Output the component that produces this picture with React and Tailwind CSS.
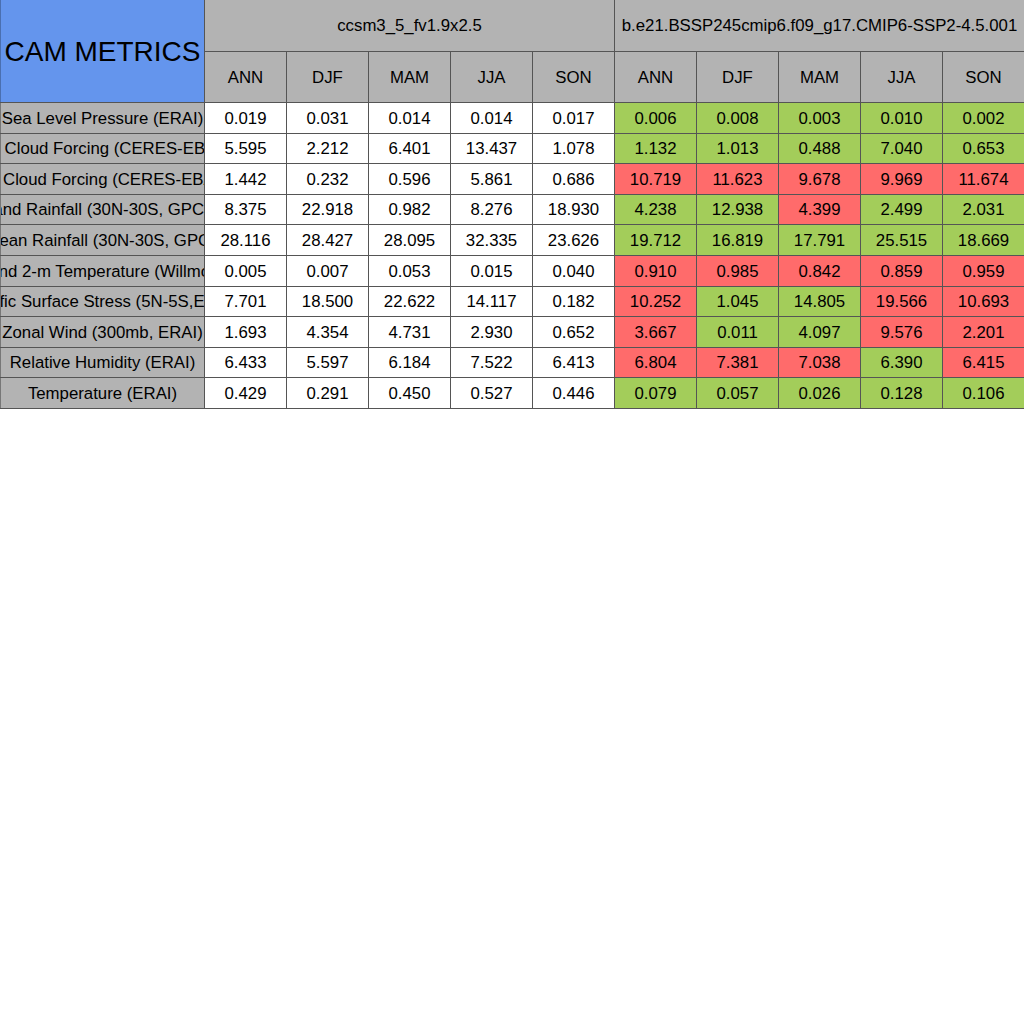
import React from "react";

const seasons = ["ANN", "DJF", "MAM", "JJA", "SON"];

const rows = [
  ["Sea Level Pressure (ERAI)", ["0.019", "0.031", "0.014", "0.014", "0.017"], [["0.006", "g"], ["0.008", "g"], ["0.003", "g"], ["0.010", "g"], ["0.002", "g"]]],
  ["SW Cloud Forcing (CERES-EBAF)", ["5.595", "2.212", "6.401", "13.437", "1.078"], [["1.132", "g"], ["1.013", "g"], ["0.488", "g"], ["7.040", "g"], ["0.653", "g"]]],
  ["LW Cloud Forcing (CERES-EBAF)", ["1.442", "0.232", "0.596", "5.861", "0.686"], [["10.719", "r"], ["11.623", "r"], ["9.678", "r"], ["9.969", "r"], ["11.674", "r"]]],
  ["Land Rainfall (30N-30S, GPCP)", ["8.375", "22.918", "0.982", "8.276", "18.930"], [["4.238", "g"], ["12.938", "g"], ["4.399", "r"], ["2.499", "g"], ["2.031", "g"]]],
  ["Ocean Rainfall (30N-30S, GPCP)", ["28.116", "28.427", "28.095", "32.335", "23.626"], [["19.712", "g"], ["16.819", "g"], ["17.791", "g"], ["25.515", "g"], ["18.669", "g"]]],
  ["Land 2-m Temperature (Willmott)", ["0.005", "0.007", "0.053", "0.015", "0.040"], [["0.910", "r"], ["0.985", "r"], ["0.842", "r"], ["0.859", "r"], ["0.959", "r"]]],
  ["Pacific Surface Stress (5N-5S,ERAI)", ["7.701", "18.500", "22.622", "14.117", "0.182"], [["10.252", "r"], ["1.045", "g"], ["14.805", "g"], ["19.566", "r"], ["10.693", "r"]]],
  ["Zonal Wind (300mb, ERAI)", ["1.693", "4.354", "4.731", "2.930", "0.652"], [["3.667", "r"], ["0.011", "g"], ["4.097", "g"], ["9.576", "r"], ["2.201", "r"]]],
  ["Relative Humidity (ERAI)", ["6.433", "5.597", "6.184", "7.522", "6.413"], [["6.804", "r"], ["7.381", "r"], ["7.038", "r"], ["6.390", "g"], ["6.415", "r"]]],
  ["Temperature (ERAI)", ["0.429", "0.291", "0.450", "0.527", "0.446"], [["0.079", "g"], ["0.057", "g"], ["0.026", "g"], ["0.128", "g"], ["0.106", "g"]]],
];

const cell = "flex items-center justify-center overflow-hidden whitespace-nowrap pt-px";

export default function App() {
  return (
    <div
      className="w-[1024px] h-[1024px] bg-white text-black text-[16.8px]"
      style={{ fontFamily: '"Liberation Sans", Arial, sans-serif' }}
    >
      <div className="grid grid-cols-[204px_repeat(10,81px)] grid-rows-[51px_50px_repeat(10,29.6px)] gap-px bg-[#555] pb-px w-[1024px]">
        <div className={`${cell} row-span-2 bg-[#6495ed] text-[28px] border-l border-[#4a6fb0]`}>
          <span>CAM METRICS</span>
        </div>
        <div className={`${cell} col-span-5 bg-[#b3b3b3]`}>ccsm3_5_fv1.9x2.5</div>
        <div className={`${cell} col-span-5 bg-[#b3b3b3]`}>b.e21.BSSP245cmip6.f09_g17.CMIP6-SSP2-4.5.001</div>
        {[...seasons, ...seasons].map((s, i) => (
          <div key={"h" + i} className={`${cell} bg-[#b3b3b3]`}>
            {s}
          </div>
        ))}
        {rows.map(([name, a, b], ri) => (
          <React.Fragment key={ri}>
            <div className={`${cell} bg-[#b3b3b3] border-l border-[#777]`}>
              <span className="shrink-0">{name}</span>
            </div>
            {a.map((v, i) => (
              <div key={"a" + i} className={`${cell} bg-white`}>
                {v}
              </div>
            ))}
            {b.map(([v, c], i) => (
              <div key={"b" + i} className={`${cell} ${c === "g" ? "bg-[#a3cd5a]" : "bg-[#ff6b6b]"}`}>
                {v}
              </div>
            ))}
          </React.Fragment>
        ))}
      </div>
    </div>
  );
}
